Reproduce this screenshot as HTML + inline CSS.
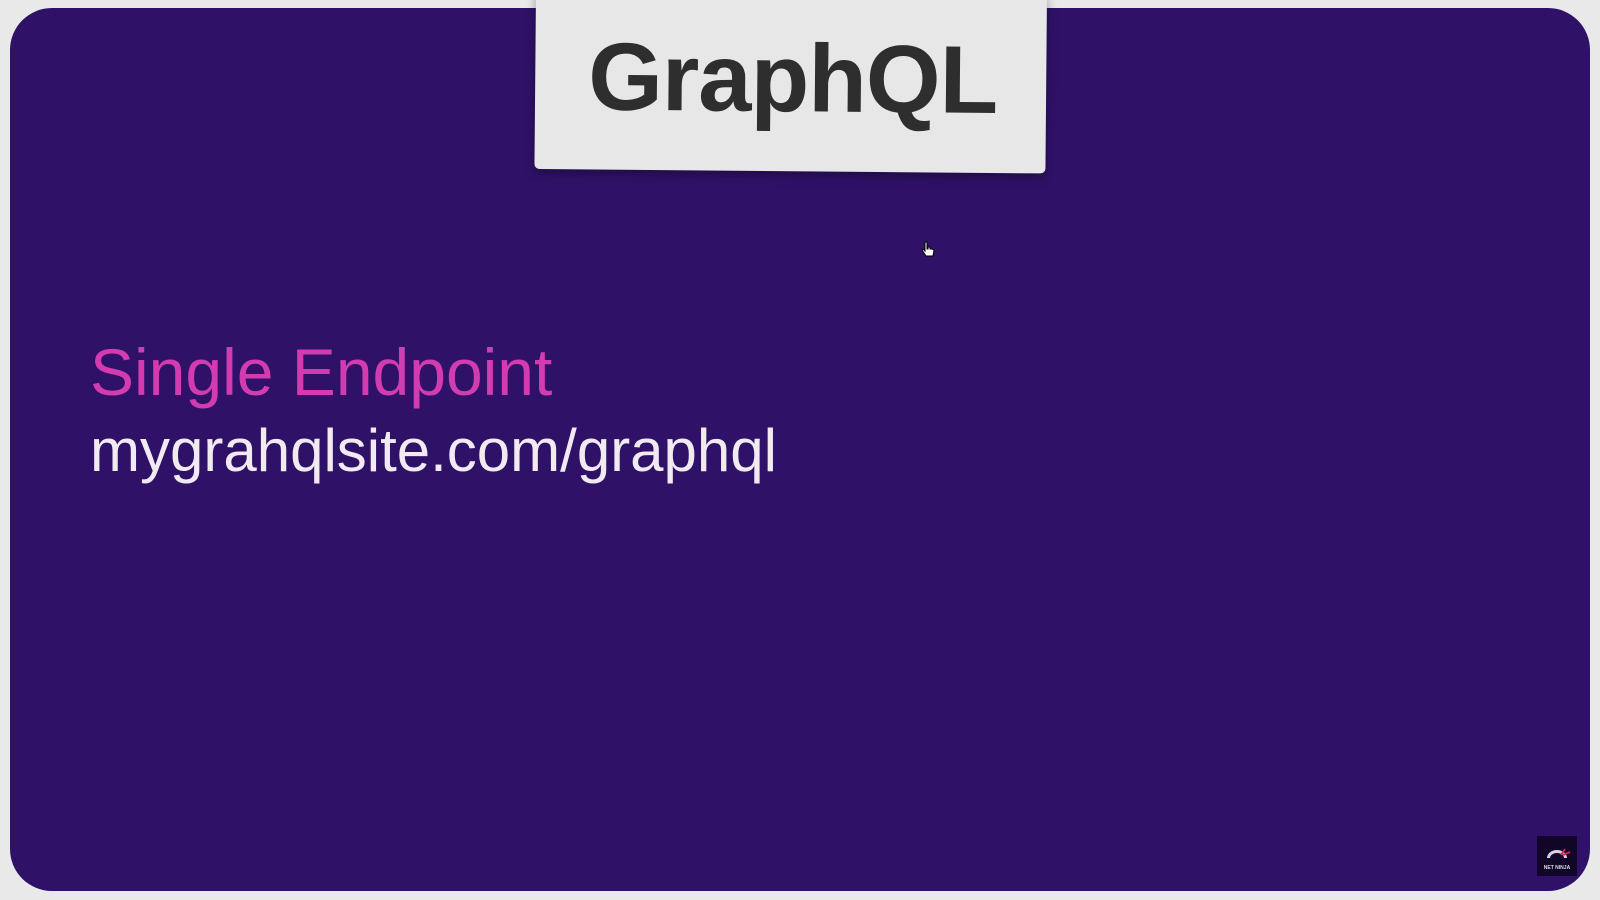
<!DOCTYPE html>
<html><head><style>
html,body{margin:0;width:1600px;height:900px;overflow:hidden;background:#e9e9e9;font-family:"Liberation Sans",sans-serif}
.panel{position:absolute;left:10px;top:8px;width:1580px;height:883px;background:#2f1168;border-radius:42px}
.card{position:absolute;left:536px;top:-10px;width:511px;height:179px;background:#e7e7e7;border-radius:0 0 5px 5px;transform:rotate(0.5deg);transform-origin:0 0;box-shadow:0 4px 10px rgba(0,0,0,.35)}
.card span{position:absolute;left:53px;top:32px;font-size:96px;font-weight:bold;color:#2e2e2e;letter-spacing:-1px}
.t1{position:absolute;left:90px;top:334px;font-size:66px;color:#d33cb0;white-space:nowrap}
.t2{position:absolute;left:90px;top:416px;font-size:60px;color:#f1eaf1;white-space:nowrap}
.logo{position:absolute;left:1537px;top:836px;width:40px;height:40px;background:#120628}
</style></head><body>
<div class="panel"></div>
<div class="card"><span>GraphQL</span></div>
<div class="t1">Single Endpoint</div>
<div class="t2">mygrahqlsite.com/graphql</div>
<svg style="position:absolute;left:921px;top:241px" width="14" height="18" viewBox="0 0 14 18"><path d="M4 1v9l-2-2-1 1 4 6h7l1-6-2-1h-2V6h-2V8H6V1z" fill="#fff" stroke="#000" stroke-width="1"/></svg>
<div class="logo"><svg width="40" height="40" viewBox="0 0 40 40"><path d="M10 22a10 8 0 0 1 20 0h-3a7 5 0 0 0-14 0z" fill="#d8d2e0"/><path d="M28 13l-4 6M33 16l-7 3" stroke="#d0245a" stroke-width="2"/><text x="20" y="33" font-size="5" fill="#ddd" text-anchor="middle" font-family="Liberation Sans" font-weight="bold">NET NINJA</text></svg></div>
</body></html>
